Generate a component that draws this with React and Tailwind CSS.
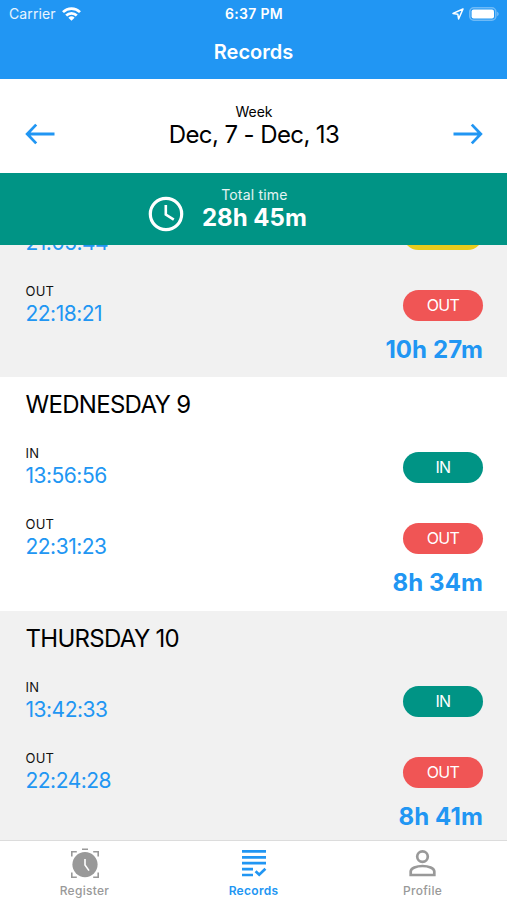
import React from 'react'

const days = [
    {
        title: '',
        total: '10h 27m',
        gray: true,
        rows: [
            { type: '', time: '21:05:44' },
            { type: 'OUT', time: '22:18:21' },
        ],
    },
    {
        title: 'WEDNESDAY 9',
        total: '8h 34m',
        gray: false,
        rows: [
            { type: 'IN', time: '13:56:56' },
            { type: 'OUT', time: '22:31:23' },
        ],
    },
    {
        title: 'THURSDAY 10',
        total: '8h 41m',
        gray: true,
        rows: [
            { type: 'IN', time: '13:42:33' },
            { type: 'OUT', time: '22:24:28' },
        ],
    },
]

const pillColors = {
    IN: 'bg-[#009485]',
    OUT: 'bg-[#f05555]',
}

function StatusBar() {
    return (
        <div className="flex h-[27px] items-center justify-between pl-[9px] pr-[8px] text-[14px] text-white">
            <div className="flex flex-1 items-center gap-[6px]">
                <span className="tracking-[0.1px] text-white/90">Carrier</span>
                <svg width="19" height="14" viewBox="0 0 19 14" fill="none" stroke="currentColor" strokeWidth="2.7">
                    <path d="M1 5.1a12.2 12.2 0 0 1 17 0" />
                    <path d="M4.2 8.5a7.6 7.6 0 0 1 10.6 0" />
                    <path d="M9.5 13.8 6.4 10.7a4.5 4.5 0 0 1 6.2 0z" fill="currentColor" stroke="none" />
                </svg>
            </div>
            <span className="font-semibold tracking-[0.3px]">6:37 PM</span>
            <div className="flex flex-1 items-center justify-end gap-[5px]">
                <svg width="12" height="12" viewBox="0 0 12 12" fill="none" stroke="currentColor" strokeWidth="1.5" strokeLinejoin="round">
                    <path d="M11 1 1 5.4l4.8.8.8 4.8z" />
                </svg>
                <svg width="30" height="14" viewBox="0 0 30 14">
                    <rect x="0.8" y="0.8" width="26" height="12.4" rx="4" fill="none" stroke="#fff" strokeOpacity="0.35" strokeWidth="1.6" />
                    <rect x="2.6" y="2.4" width="22.4" height="9.2" rx="2" fill="#fff" />
                    <path d="M28.2 4.8c1.9.7 1.9 3.7 0 4.4z" fill="#fff" fillOpacity="0.4" />
                </svg>
            </div>
        </div>
    )
}

function Arrow({ className = '' }) {
    return (
        <svg className={className} width="30" height="22" viewBox="0 0 30 22" fill="none" stroke="#2196f3" strokeWidth="2.8">
            <path d="M29.5 11H2.5M11.2 1.6 2.2 11l9 9.4" />
        </svg>
    )
}

function Row({ type, time }) {
    return (
        <div className="flex h-[71px] items-center justify-between">
            <div className="pb-px">
                <p className="h-[18px] text-[13px] leading-[17px] tracking-[0.2px] text-[#111]">{type}</p>
                <p className="text-[21px] leading-[26px] tracking-[-0.5px] text-[#2196f3]">{time}</p>
            </div>
            <div className={`flex h-[31px] w-20 items-center justify-center rounded-full pb-px text-[16px] tracking-[-0.6px] text-white ${pillColors[type] || 'bg-[#e8cb1c]'}`}>
                {type}
            </div>
        </div>
    )
}

function Day({ day }) {
    return (
        <div className={`shrink-0 pl-[25.5px] pr-6 ${day.gray ? 'bg-[#f1f1f1]' : 'bg-white'}`}>
            {day.title && <h2 className="h-[55px] text-[24px] leading-[55px] tracking-[-0.7px]">{day.title}</h2>}
            {day.rows.map((row) => (
                <Row key={row.time} type={row.type} time={row.time} />
            ))}
            <p className="h-[36.5px] text-right text-[24px] font-bold leading-[18px] tracking-[0.1px] text-[#2196f3]">{day.total}</p>
        </div>
    )
}

function Tab({ label, active, children }) {
    return (
        <div className={`flex flex-1 flex-col items-center pt-[6px] ${active ? 'text-[#2196f3]' : 'text-[#999]'}`}>
            {children}
            <span className={`mt-[4px] text-[12px] leading-[16px] tracking-[0.3px] ${active ? 'font-semibold' : 'font-medium'}`}>{label}</span>
        </div>
    )
}

function App() {
    return (
        <div className="flex h-[900px] w-[507px] flex-col overflow-hidden bg-white font-['Inter',sans-serif] text-black">
            <header className="h-[79px] bg-[#2196f3]">
                <StatusBar />
                <h1 className="text-center text-[20px] font-semibold leading-[50px] tracking-[0px] text-white">Records</h1>
            </header>

            <div className="flex h-[94px] items-center justify-between pl-[25px] pr-6">
                <Arrow className="mt-[15px]" />
                <div className="pb-[3px] text-center">
                    <p className="text-[14px] leading-[20px]">Week</p>
                    <p className="text-[24px] leading-[26px] tracking-[-0.6px]">Dec, 7 - Dec, 13</p>
                </div>
                <Arrow className="mt-[15px] rotate-180" />
            </div>

            <div className="flex h-[72px] items-center bg-[#009485] pl-[148px] text-white">
                <svg className="mt-[10px]" width="36" height="36" viewBox="0 0 36 36" fill="none" stroke="currentColor" strokeWidth="3.2">
                    <circle cx="18" cy="18" r="15.7" />
                    <path d="M17.8 9v9.6l8 5" strokeWidth="2.6" />
                </svg>
                <div className="ml-[18px] pb-[3px] text-center">
                    <p className="text-[14px] leading-[20px] tracking-[0.2px] text-white/90">Total time</p>
                    <p className="text-[24px] font-bold leading-[26px] tracking-[0px]">28h 45m</p>
                </div>
            </div>

            <main className="h-[595px] overflow-hidden bg-[#f1f1f1]">
                <div className="-mt-[46.5px] flex flex-col">
                    {days.map((day) => (
                        <Day key={day.total} day={day} />
                    ))}
                </div>
            </main>

            <nav className="flex h-[60px] border-t border-[#dcdcdc] bg-white">
                <Tab label="Register">
                    <svg width="30" height="32" viewBox="0 0 30 32" fill="none" stroke="currentColor" strokeWidth="1.6">
                        <circle cx="15" cy="17.6" r="12.6" fill="currentColor" stroke="none" />
                        <path d="M12 2.2h6M1.8 9.6V4.8h5M23.2 4.8h5v4.8M1.8 25.5v4.8h5M23.2 30.3h5v-4.8" />
                        <path d="M15 12v6l4 5.6" stroke="#fff" strokeWidth="1.6" />
                    </svg>
                </Tab>
                <Tab label="Records" active>
                    <svg width="26" height="32" viewBox="0 0 26 32" fill="none" stroke="currentColor" strokeWidth="2.7">
                        <path d="M1 4.4h24M1 10.3h24M1 16.2h24M1 22.1h11M1 28h11" />
                        <path d="m14.6 24.3 3.6 3.4 6.2-6" />
                    </svg>
                </Tab>
                <Tab label="Profile">
                    <svg width="30" height="32" viewBox="0 0 30 32" fill="none" stroke="currentColor" strokeWidth="2.7">
                        <circle cx="14.5" cy="9.6" r="5.3" />
                        <path d="M2.7 28v-3.4c0-3.2 5.8-5.6 11.8-5.6s11.8 2.4 11.8 5.6V28z" />
                    </svg>
                </Tab>
            </nav>
        </div>
    )
}

export default App
